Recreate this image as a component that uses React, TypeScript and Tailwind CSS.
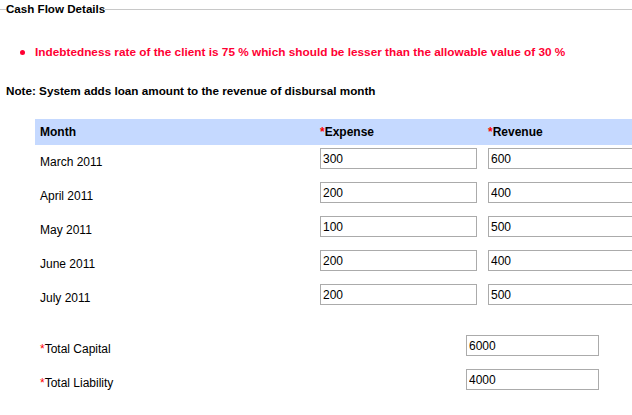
import React from 'react';

const rows = [
  { month: 'March 2011', expense: '300', revenue: '600' },
  { month: 'April 2011', expense: '200', revenue: '400' },
  { month: 'May 2011', expense: '100', revenue: '500' },
  { month: 'June 2011', expense: '200', revenue: '400' },
  { month: 'July 2011', expense: '200', revenue: '500' },
];

function Field({ value, className }: { value: string; className: string }) {
  return (
    <input
      readOnly
      value={value}
      className={`shrink-0 h-[21px] border border-[#ababab] bg-white px-[2px] text-[12px] text-black outline-none ${className}`}
    />
  );
}

export default function App() {
  return (
    <div className="w-[632px] h-[415px] overflow-hidden bg-white text-[12px] text-black font-['Liberation_Sans',Arial,sans-serif]">
      {/* Legend */}
      <div className="flex items-center h-[18px]">
        <div className="w-[6px] h-px bg-[#c8c8c8]" />
        <span className="font-bold leading-[18px] text-[11.6px]">Cash Flow Details</span>
        <div className="flex-1 h-px bg-[#c8c8c8]" />
      </div>

      {/* Error */}
      <div className="flex items-center mt-[27px] h-[14px] text-[#ff0033] font-bold text-[11.8px]">
        <span className="ml-[20px] w-[5px] h-[5px] rounded-full bg-[#ff0033]" />
        <span className="ml-[10px] leading-[14px] whitespace-nowrap">
          Indebtedness rate of the client is 75 % which should be lesser than the allowable value of 30 %
        </span>
      </div>

      {/* Note */}
      <div className="mt-[25px] ml-[6px] h-[14px] leading-[14px] font-bold text-[11.7px] whitespace-nowrap">
        Note: System adds loan amount to the revenue of disbursal month
      </div>

      {/* Table */}
      <div className="mt-[21px] ml-[35px] w-[620px]">
        <div className="flex items-center h-[26px] bg-[#c5d9ff] font-bold">
          <div className="shrink-0 w-[285px] pl-[5px]">Month</div>
          <div className="shrink-0 w-[168px]">
            <span className="text-[#ff0000]">*</span>Expense
          </div>
          <div className="shrink-0">
            <span className="text-[#ff0000]">*</span>Revenue
          </div>
        </div>
        {rows.map((r) => (
          <div key={r.month} className="flex h-[34px]">
            <div className="shrink-0 w-[285px] pl-[5px] flex items-center">{r.month}</div>
            <div className="shrink-0 w-[168px]">
              <Field value={r.expense} className="mt-[3px] w-[157px]" />
            </div>
            <div className="shrink-0">
              <Field value={r.revenue} className="mt-[3px] w-[157px]" />
            </div>
          </div>
        ))}

        {/* Totals */}
        <div className="mt-[17px]">
          <div className="flex h-[34px]">
            <div className="shrink-0 w-[431px] pl-[5px] flex items-center">
              <span className="text-[#ff0000]">*</span>Total Capital
            </div>
            <Field value="6000" className="mt-[3px] w-[133px]" />
          </div>
          <div className="flex h-[34px]">
            <div className="shrink-0 w-[431px] pl-[5px] flex items-center">
              <span className="text-[#ff0000]">*</span>Total Liability
            </div>
            <Field value="4000" className="mt-[3px] w-[133px]" />
          </div>
        </div>
      </div>
    </div>
  );
}
